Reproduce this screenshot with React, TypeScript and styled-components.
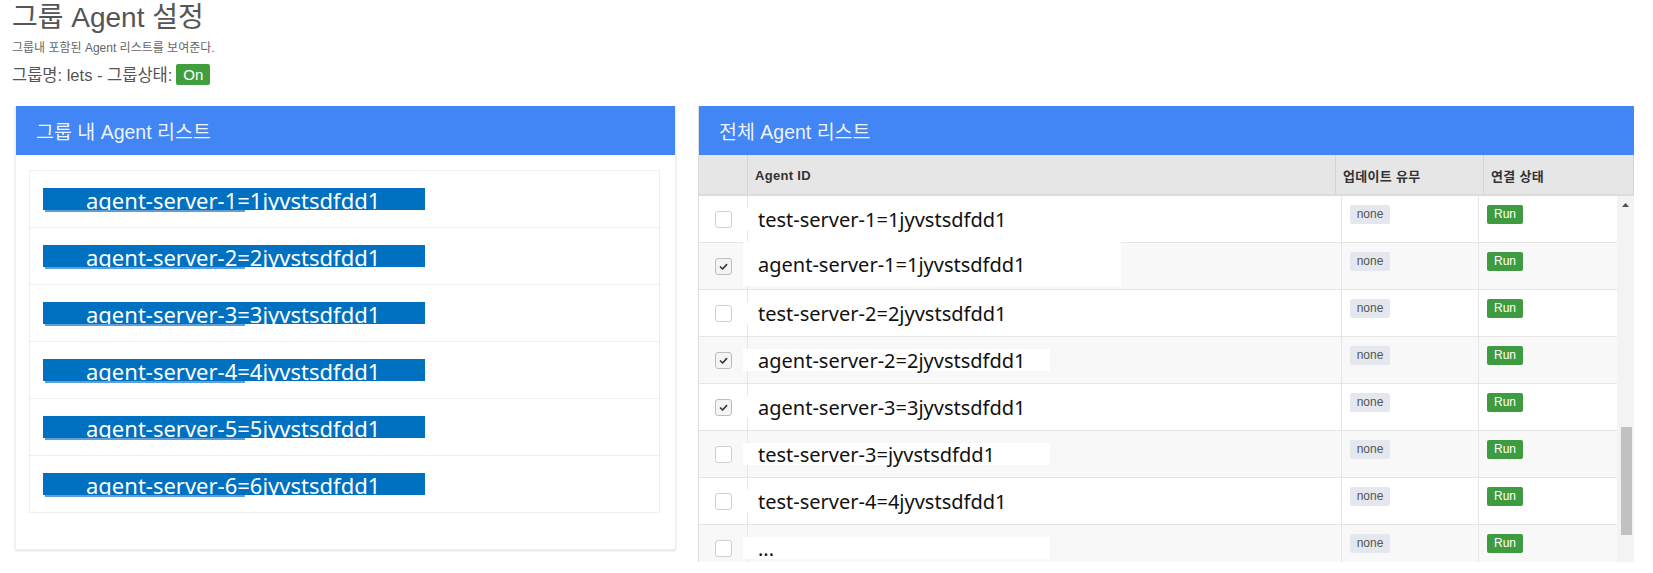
import React from "react";
import styled, { createGlobalStyle } from "styled-components";

const GlobalStyle = createGlobalStyle`
  html, body { margin: 0; padding: 0; background: #fff; }
  body { font-family: "Liberation Sans", "Noto Sans CJK KR", sans-serif; color: #333; }
  * { box-sizing: border-box; }
`;

const Page = styled.div`
  width: 1653px;
  padding: 0 19px 0 15px;
`;

const Intro = styled.header`
  display: flex;
  flex-direction: column;
  margin-left: -3px;
`;

const Title = styled.h1`
  margin: 0;
  font-size: 28px;
  line-height: 36px;
  font-weight: 400;
  color: #555;
`;

const Subtitle = styled.p`
  margin: 4px 0 0;
  font-size: 12px;
  line-height: 16px;
  color: #666;
`;

const GroupInfo = styled.div`
  margin-top: 6px;
  display: flex;
  align-items: center;
  height: 24px;
  font-size: 16.5px;
  color: #555;
  gap: 4px;
`;

const StateBadge = styled.span`
  display: inline-flex;
  align-items: center;
  justify-content: center;
  width: 34px;
  height: 21px;
  background: #409e3f;
  color: #fff;
  font-size: 15px;
  border-radius: 2px;
`;

const Columns = styled.div`
  margin-top: 20px;
  display: grid;
  grid-template-columns: 661px 935px;
  column-gap: 23px;
  align-items: start;
`;

const Panel = styled.section`
  background: #fff;
  border: 1px solid #eee;
  border-top: 0;
  box-shadow: 0 1px 2px rgba(0, 0, 0, 0.12);
`;

const PanelHeading = styled.div`
  height: 49px;
  display: flex;
  align-items: center;
  padding-left: 20px;
  background: #4285f4;
  color: rgba(255, 255, 255, 0.92);
  font-size: 19.5px;
`;

const PanelBody = styled.div`
  padding: 15px 15px 36px 13px;
`;

const ListGroup = styled.ul`
  list-style: none;
  margin: 0;
  padding: 0;
  border: 1px solid #efefef;
`;

const ListItem = styled.li`
  height: 57px;
  padding: 17px 0 0 13px;
  border-top: 1px solid #efefef;
  &:first-child {
    border-top: 0;
    height: 56px;
  }
`;

const HighlightBar = styled.span`
  position: relative;
  display: block;
  width: 382px;
  height: 22px;
  padding-left: 43px;
  background: #0070c0;
  color: #fff;
  font-family: "Noto Sans", sans-serif;
  font-size: 22px;
  line-height: 25px;
  white-space: nowrap;
  &::after {
    content: "";
    position: absolute;
    left: 2px;
    bottom: -2px;
    width: 200px;
    height: 2px;
    background: #5d9fd8;
  }
`;

const TablePanel = styled.section`
  background: #fff;
  border-left: 1px solid #ddd;
  margin-left: -1px;
  width: 936px;
`;

const HeadRow = styled.div`
  display: grid;
  grid-template-columns: 49px 588px 148px 150px;
  height: 41px;
  background: #e6e6e6;
  border-bottom: 2px solid #dcdcdc;
`;

const HeadCell = styled.div`
  display: flex;
  align-items: center;
  padding: 2px 0 0 7px;
  border-right: 1px solid #d4d4d4;
  font-size: 13px;
  letter-spacing: 0.3px;
  font-weight: 700;
  color: #333;
`;

const BodyArea = styled.div`
  display: flex;
  height: 366px;
`;

const Rows = styled.div`
  flex: 1;
  overflow: hidden;
`;

const Row = styled.div<{ $striped: boolean }>`
  display: grid;
  grid-template-columns: 49px 594px 137px 137px;
  height: 47px;
  border-bottom: 1px solid #e6e6e6;
  background: ${(p) => (p.$striped ? "#f8f8f8" : "#fff")};
`;

const CheckCell = styled.div`
  display: flex;
  align-items: center;
  justify-content: center;
  padding-left: 1px;
  border-right: 1px solid #e6e6e6;
`;

const IdCell = styled.div`
  display: flex;
  align-items: center;
  border-right: 1px solid #e6e6e6;
`;

const IdPatch = styled.span<{ $wide: boolean }>`
  display: flex;
  align-items: center;
  width: ${(p) => (p.$wide ? "378px" : "307px")};
  height: ${(p) => (p.$wide ? "44px" : "22px")};
  margin-left: -5px;
  margin-top: ${(p) => (p.$wide ? "-4px" : "0")};
  padding-left: 15px;
  background: #fff;
  font-family: "Noto Sans", sans-serif;
  font-size: 20px;
  color: #111;
  white-space: nowrap;
`;

const LabelCell = styled.div<{ $last?: boolean }>`
  padding: 8px 0 0 8px;
  border-right: ${(p) => (p.$last ? "0" : "1px solid #e6e6e6")};
`;

const Tag = styled.span<{ $tone: "none" | "run" }>`
  display: inline-flex;
  align-items: center;
  justify-content: center;
  height: 19px;
  width: ${(p) => (p.$tone === "none" ? "40px" : "36px")};
  border-radius: 2px;
  font-size: 12px;
  background: ${(p) => (p.$tone === "none" ? "#e4e8ee" : "#3f9b3f")};
  color: ${(p) => (p.$tone === "none" ? "#555" : "#fff")};
`;

const Box = styled.span<{ $checked: boolean }>`
  display: inline-flex;
  align-items: center;
  justify-content: center;
  width: 17px;
  height: 17px;
  border: 1px solid ${(p) => (p.$checked ? "#bdbdbd" : "#cfcfcf")};
  border-radius: 3px;
  background: ${(p) => (p.$checked ? "#f4f4f4" : "#fff")};
`;

const ScrollTrack = styled.div`
  width: 17px;
  display: flex;
  flex-direction: column;
  align-items: center;
  background: #f3f3f3;
`;

const ScrollArrow = styled.div`
  width: 17px;
  height: 17px;
  display: flex;
  align-items: center;
  justify-content: center;
`;

const ScrollThumb = styled.div`
  width: 11px;
  height: 108px;
  margin-top: 214px;
  margin-left: 1px;
  background: #c1c1c1;
`;

const groupAgents = [
  "agent-server-1=1jyvstsdfdd1",
  "agent-server-2=2jyvstsdfdd1",
  "agent-server-3=3jyvstsdfdd1",
  "agent-server-4=4jyvstsdfdd1",
  "agent-server-5=5jyvstsdfdd1",
  "agent-server-6=6jyvstsdfdd1",
];

const allAgents: { id: string; checked: boolean; wide?: boolean }[] = [
  { id: "test-server-1=1jyvstsdfdd1", checked: false },
  { id: "agent-server-1=1jyvstsdfdd1", checked: true, wide: true },
  { id: "test-server-2=2jyvstsdfdd1", checked: false },
  { id: "agent-server-2=2jyvstsdfdd1", checked: true },
  { id: "agent-server-3=3jyvstsdfdd1", checked: true },
  { id: "test-server-3=jyvstsdfdd1", checked: false },
  { id: "test-server-4=4jyvstsdfdd1", checked: false },
  { id: "...", checked: false },
];

function Checkbox({ checked }: { checked: boolean }) {
  return (
    <Box $checked={checked}>
      {checked && (
        <svg width="11" height="11" viewBox="0 0 11 11">
          <path d="M2.5 6 L4.6 8 L8.6 3.6" fill="none" stroke="#3a3a3a" strokeWidth="1.7" strokeLinecap="round" strokeLinejoin="round" />
        </svg>
      )}
    </Box>
  );
}

export default function App() {
  return (
    <>
      <GlobalStyle />
      <Page>
        <Intro>
          <Title>그룹 Agent 설정</Title>
          <Subtitle>그룹내 포함된 Agent 리스트를 보여준다.</Subtitle>
          <GroupInfo>
            그룹명: lets - 그룹상태: <StateBadge>On</StateBadge>
          </GroupInfo>
        </Intro>
        <Columns>
          <Panel>
            <PanelHeading>그룹 내 Agent 리스트</PanelHeading>
            <PanelBody>
              <ListGroup>
                {groupAgents.map((a) => (
                  <ListItem key={a}>
                    <HighlightBar>{a}</HighlightBar>
                  </ListItem>
                ))}
              </ListGroup>
            </PanelBody>
          </Panel>
          <TablePanel>
            <PanelHeading>전체 Agent 리스트</PanelHeading>
            <HeadRow>
              <HeadCell />
              <HeadCell>Agent ID</HeadCell>
              <HeadCell>업데이트 유무</HeadCell>
              <HeadCell>연결 상태</HeadCell>
            </HeadRow>
            <BodyArea>
              <Rows>
                {allAgents.map((a, i) => (
                  <Row key={a.id + i} $striped={i % 2 === 1}>
                    <CheckCell>
                      <Checkbox checked={a.checked} />
                    </CheckCell>
                    <IdCell>
                      <IdPatch $wide={!!a.wide}>{a.id}</IdPatch>
                    </IdCell>
                    <LabelCell>
                      <Tag $tone="none">none</Tag>
                    </LabelCell>
                    <LabelCell $last>
                      <Tag $tone="run">Run</Tag>
                    </LabelCell>
                  </Row>
                ))}
              </Rows>
              <ScrollTrack>
                <ScrollArrow>
                  <svg width="7" height="4" viewBox="0 0 7 4">
                    <path d="M0 4 L3.5 0 L7 4 Z" fill="#505050" />
                  </svg>
                </ScrollArrow>
                <ScrollThumb />
              </ScrollTrack>
            </BodyArea>
          </TablePanel>
        </Columns>
      </Page>
    </>
  );
}
